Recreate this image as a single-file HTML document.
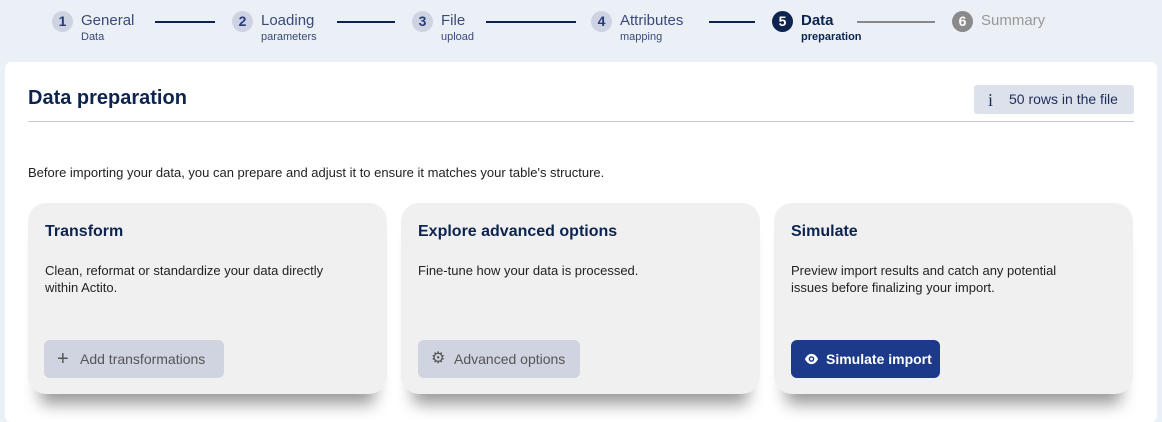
<!DOCTYPE html>
<html><head><style>
*{box-sizing:border-box;margin:0;padding:0}
body{width:1162px;height:417px;overflow:hidden;background:#ebeff6;font-family:"Liberation Sans",sans-serif;position:relative}
.step{position:absolute;top:11px;display:flex;align-items:flex-start}
.num{width:21px;height:21px;border-radius:50%;background:#cdd3e3;color:#2a3a7a;font-size:14px;font-weight:bold;text-align:center;line-height:21px;margin-right:8px}
.t1{font-size:15px;color:#3a4a7a;line-height:20px}
.t2{font-size:11px;color:#3a4a7a;line-height:12px}
.line{position:absolute;top:21px;height:2px;background:#0d2450}
.panel{position:absolute;left:5px;top:62px;width:1152px;height:360px;background:#fff;border-radius:6px}
h1{position:absolute;left:28px;top:87px;font-size:20px;color:#0d2450;font-weight:bold}
.hr{position:absolute;left:28px;top:121px;width:1106px;height:1px;background:#c8c8c8}
.badge{position:absolute;left:974px;top:85px;width:160px;height:29px;background:#dde1ec;border-radius:3px;font-size:14px;color:#1d2e5e;line-height:29px;padding-left:35px}
.badge i{position:absolute;left:14px;top:1px;font-style:normal;font-size:18px;font-family:"Liberation Serif",serif}
.intro{position:absolute;left:28px;top:165px;font-size:13px;color:#222}
.card{position:absolute;top:203px;width:359px;height:191px;background:#f0f0f0;border-radius:18px;box-shadow:0 22px 16px -12px rgba(0,0,0,.4)}
.card h2{position:absolute;left:17px;top:20px;font-size:16px;color:#0d2450;font-weight:bold}
.card p{position:absolute;left:17px;top:59px;font-size:13px;color:#222;line-height:17px;width:300px}
.btn{position:absolute;left:16px;top:137px;height:38px;border-radius:6px;background:#d0d4e0;color:#555;font-size:14px;line-height:38px;padding:0 0 0 36px}
.btn .ic{position:absolute;left:13px;top:0}
</style></head><body>
<div class="step" style="left:52px"><div class="num">1</div><div><div class="t1">General</div><div class="t2">Data</div></div></div>
<div class="line" style="left:155px;width:60px"></div>
<div class="step" style="left:232px"><div class="num">2</div><div><div class="t1">Loading</div><div class="t2">parameters</div></div></div>
<div class="line" style="left:337px;width:58px"></div>
<div class="step" style="left:412px"><div class="num">3</div><div><div class="t1">File</div><div class="t2">upload</div></div></div>
<div class="line" style="left:486px;width:90px"></div>
<div class="step" style="left:591px"><div class="num">4</div><div><div class="t1">Attributes</div><div class="t2">mapping</div></div></div>
<div class="line" style="left:709px;width:46px"></div>
<div class="step" style="left:772px"><div class="num" style="background:#0d2450;color:#fff">5</div><div><div class="t1" style="color:#0d2450;font-weight:bold">Data</div><div class="t2" style="color:#0d2450;font-weight:bold">preparation</div></div></div>
<div class="line" style="left:857px;width:78px;background:#888"></div>
<div class="step" style="left:952px"><div class="num" style="background:#8a8a8a;color:#fff">6</div><div><div class="t1" style="color:#999">Summary</div></div></div>
<div class="panel"></div>
<h1>Data preparation</h1>
<div class="badge"><i>i</i>50 rows in the file</div>
<div class="hr"></div>
<div class="intro">Before importing your data, you can prepare and adjust it to ensure it matches your table's structure.</div>
<div class="card" style="left:28px"><h2>Transform</h2><p>Clean, reformat or standardize your data directly within Actito.</p>
<div class="btn" style="width:180px"><span class="ic" style="font-size:20px">+</span>Add transformations</div></div>
<div class="card" style="left:401px"><h2>Explore advanced options</h2><p>Fine-tune how your data is processed.</p>
<div class="btn" style="left:17px;width:162px"><span class="ic" style="font-size:16px">&#9881;</span>Advanced options</div></div>
<div class="card" style="left:774px"><h2>Simulate</h2><p>Preview import results and catch any potential issues before finalizing your import.</p>
<div class="btn" style="left:17px;width:149px;background:#1d3a8a;color:#fff;font-weight:bold;padding-left:35px"><svg class="ic" style="top:12px" width="15" height="14" viewBox="0 0 16 14"><path d="M1 7C3 3 5.5 1.5 8 1.5S13 3 15 7C13 11 10.5 12.5 8 12.5S3 11 1 7Z" fill="#fff"/><circle cx="8" cy="7" r="3" fill="#1d3a8a"/><circle cx="8" cy="7" r="1.5" fill="#fff"/></svg>Simulate import</div></div>
</body></html>
